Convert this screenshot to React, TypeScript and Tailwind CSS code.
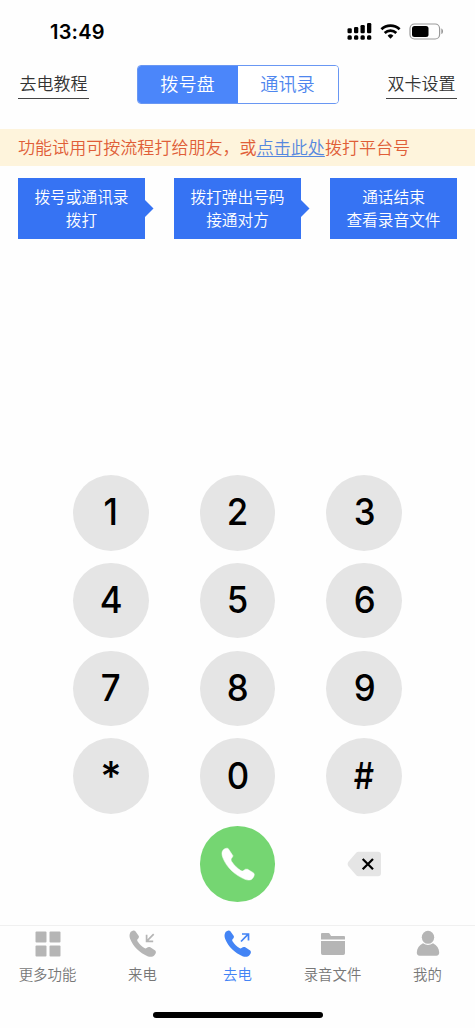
import React from 'react';

const keys = ['1', '2', '3', '4', '5', '6', '7', '8', '9', '*', '0', '#'];

const steps = [
  ['拨号或通讯录', '拨打'],
  ['拨打弹出号码', '接通对方'],
  ['通话结束', '查看录音文件'],
];

const HANDSET =
  'M1.2 2.8C2.2 1 4.9-.2 6.4 1.2L9.6 5.7C10.5 7.2 9.4 8.5 8.5 9.3C8 10 8.2 10.7 8.7 11.4C10.5 14 12.8 16.4 15.4 18.1C16.2 18.6 17 18.5 17.6 18C18.7 17 20 16.5 21.3 17.3L26.2 20.6C27.5 21.8 26.8 23.8 25.4 25.2C23.8 27.2 20.9 27.2 18.5 26.2C10.8 23 4.2 16.6 1.2 9C.3 6.700.3 4.600 1.200 2.800Z';

function StatusBar() {
  return (
    <div className="flex h-[65px] shrink-0 items-start justify-between pl-[50px] pr-[32px]">
      <div className="mt-[19px] font-['Inter',sans-serif] text-[20px] font-semibold leading-[26px] tracking-[0.2px] text-black">
        13:49
      </div>
      <svg className="mt-[22px]" width="97" height="19" viewBox="0 0 97 19">
        <g fill="#000">
          <rect x="1.500" y="6.300" width="4.300" height="5" rx="1.300" />
          <rect x="8" y="5" width="4.300" height="6.300" rx="1.300" />
          <rect x="14.500" y="3" width="4.300" height="8.300" rx="1.300" />
          <rect x="21" y="1" width="4.300" height="10.300" rx="1.300" />
          <rect x="1.500" y="13.300" width="4.300" height="4.500" rx="1.500" />
          <rect x="8" y="13.300" width="4.300" height="4.500" rx="1.500" />
          <rect x="14.500" y="13.300" width="4.300" height="4.500" rx="1.500" />
          <rect x="21" y="13.300" width="4.300" height="4.500" rx="1.500" />
          <path d="M41.600 13.700a4.200 4.200 0 0 1 5.800 0L44.500 16.800Z" />
          <rect x="66" y="4" width="16.500" height="11" rx="2.500" />
          <path d="M95.300 6.500c2.300.8 2.300 4.700 0 5.500Z" fill="#999" />
        </g>
        <path d="M35.400 7.200a13.200 13.200 0 0 1 18.200 0M38.700 10.900a8.400 8.400 0 0 1 11.600 0" fill="none" stroke="#000" strokeWidth="2.700" />
        <rect x="64" y="2" width="29.600" height="15" rx="4.500" fill="none" stroke="#999" strokeWidth="1.200" />
      </svg>
    </div>
  );
}

function Header() {
  return (
    <div className="flex h-16 shrink-0 items-start justify-between px-[18px]">
      <button className="mt-[5px] h-[29px] w-[71px] border-b border-[#444] pb-[2px] text-[17px] leading-[26px] text-[#333]">去电教程</button>
      <div className="flex h-[39px] w-[202px] overflow-hidden rounded-[4px] border border-[#6997f3] text-[18.200px] leading-[35px]">
        <button className="w-1/2 bg-[#4b86fa] pb-[2px] text-white">拨号盘</button>
        <button className="w-1/2 bg-white pb-[2px] text-[#4e86ee]">通讯录</button>
      </div>
      <button className="mt-[5px] h-[29px] w-[71px] border-b border-[#444] pb-[2px] text-[17px] leading-[26px] text-[#333]">双卡设置</button>
    </div>
  );
}

function CallGlyph({ outgoing }: { outgoing?: boolean }) {
  return (
    <svg width="28" height="28" viewBox="0 0 28 28">
      <path d={HANDSET} fill="currentColor" />
      <path
        d={outgoing ? 'M17 11.500L24.200 4.200M18 4h6.500v6.500' : 'M24.700 4.200L17.800 11.100M17.600 4.800v6.500h6.600'}
        fill="none"
        stroke="currentColor"
        strokeWidth="1.700"
      />
    </svg>
  );
}

const tabs = [
  {
    label: '更多功能',
    icon: (
      <svg width="28" height="28" viewBox="0 0 28 28" fill="currentColor">
        <rect x="1.500" y="1.500" width="11" height="11" rx="1" />
        <rect x="15.500" y="1.500" width="11" height="11" rx="1" />
        <rect x="1.500" y="15.500" width="11" height="11" rx="1" />
        <rect x="15.500" y="15.500" width="11" height="11" rx="1" />
      </svg>
    ),
  },
  { label: '来电', icon: <CallGlyph /> },
  { label: '去电', active: true, icon: <CallGlyph outgoing /> },
  {
    label: '录音文件',
    icon: (
      <svg width="28" height="28" viewBox="0 0 28 28" fill="currentColor">
        <path d="M2 9.500V4q0-1 1-1h6.500q.8 0 1.200.7l1 1.800q.3.500 1 .5H25q1 0 1 1v2.500ZM2 11h24v12.300q0 1.700-1.700 1.700H3.700Q2 25 2 23.300Z" />
      </svg>
    ),
  },
  {
    label: '我的',
    icon: (
      <svg width="28" height="28" viewBox="0 0 28 28" fill="currentColor">
        <ellipse cx="14" cy="7.300" rx="6.200" ry="6.500" />
        <path d="M9 13.300q5 3.200 10 0c3.900 1.900 6 5 6.200 8.900.1 2.300-.9 3.500-3 3.500H5.800c-2.100 0-3.100-1.200-3-3.500C3 18.300 5.100 15.200 9 13.300Z" />
      </svg>
    ),
  },
];

export default function App() {
  return (
    <div className="flex h-[1028px] w-[475px] flex-col overflow-hidden bg-[#fefefe] font-['Noto_Sans_CJK_SC',sans-serif] font-[350]">
      <StatusBar />
      <Header />
      <div className="h-[37px] shrink-0 whitespace-nowrap bg-[#fef4dc] pl-[18px] text-[17.060px] leading-[36px] text-[#e05e38]">
        功能试用可按流程打给朋友，或
        <a className="text-[#5688df] underline decoration-1 underline-offset-2">点击此处</a>
        拨打平台号
      </div>
      <div className="mt-3 flex h-[61px] shrink-0 justify-between px-[18px]">
        {steps.map((lines, i) => (
          <div key={lines[0]} className="relative flex w-[127px] flex-col justify-center bg-[#3673f3] pb-[2px] text-center text-[15.700px] leading-[23px] text-white">
            {lines.map((line) => (
              <div key={line}>{line}</div>
            ))}
            {i < 2 && (
              <svg className="absolute left-full top-[22px]" width="9" height="17" viewBox="0 0 9 17">
                <path d="M0 0L8.500 8.500L0 17Z" fill="#3673f3" />
              </svg>
            )}
          </div>
        ))}
      </div>
      <div className="mt-[236px] grid shrink-0 grid-cols-[75.500px_75.500px_75.500px] justify-center gap-x-[51.200px] gap-y-[12.300px]">
        {keys.map((key) => (
          <button key={key} className="flex h-[75.500px] items-center justify-center rounded-full bg-[#e5e5e5] pb-[2px] font-['Inter',sans-serif] text-[37px] font-medium leading-none text-black">
            {key === '*' ? <span className="-mb-[3px] text-[41px]">*</span> : <span className={key === '#' ? 'scale-x-[0.86]' : 'scale-x-[0.94]'}>{key}</span>}
          </button>
        ))}
        <button className="col-start-2 flex h-[75.500px] items-center justify-center rounded-full bg-[#75d672]" aria-label="拨打">
          <svg width="34" height="34" viewBox="0 0 34 34">
            <path
              d="M1.900 3.300C3 2 4.600 1.100 6.200 1.200L7.300 1.700L11.900 8.700L11.600 9.800L10.200 11.700C9.900 12.900 10.200 13.900 11 15C13.300 18.400 16.400 21.400 19.800 23.600C20.800 24.200 21.500 24.100 22.200 23.700L24.600 22.200L26.600 22.300L32.600 25.900L33.300 27.400C33.200 29.300 32 31.200 30.400 32.400C28.700 33.400 26.300 33.200 24 32.300C14.500 28.500 5.500 20.500 1.800 10.600C.8 7.700.5 5.300 1.900 3.300Z"
              fill="#fff"
              stroke="#fff"
              strokeWidth="0.500"
              strokeLinejoin="round"
            />
          </svg>
        </button>
        <button className="flex items-center justify-center" aria-label="删除">
          <svg width="34" height="26" viewBox="0 0 34 26">
            <path d="M11.500.7H31Q34 .7 34 3.700V22.300Q34 25.300 31 25.300H11.500Q10 25.300 9 24L1.200 15Q0 13 1.200 11L9 2Q10 .7 11.500 .7Z" fill="#e5e5e5" />
            <path d="M15.700 8L26 18.300M26 8L15.700 18.300" stroke="#000" strokeWidth="2.200" />
          </svg>
        </button>
      </div>
      <nav className="mt-auto flex h-[103px] shrink-0 flex-col items-center justify-between border-t border-[#f0f0f0] pb-[10px]">
        <div className="flex w-full">
          {tabs.map((tab) => (
            <button key={tab.label} className={tab.active ? 'flex w-1/5 flex-col items-center pt-1 text-[#4384f5]' : 'flex w-1/5 flex-col items-center pt-1 text-[#b5b5b5]'}>
              {tab.icon}
              <span className={tab.active ? 'mt-[6px] text-[14.400px] leading-[20px]' : 'mt-[6px] text-[14.400px] leading-[20px] text-[#777]'}>{tab.label}</span>
            </button>
          ))}
        </div>
        <div className="h-[6px] w-[170px] rounded-full bg-black" />
      </nav>
    </div>
  );
}
